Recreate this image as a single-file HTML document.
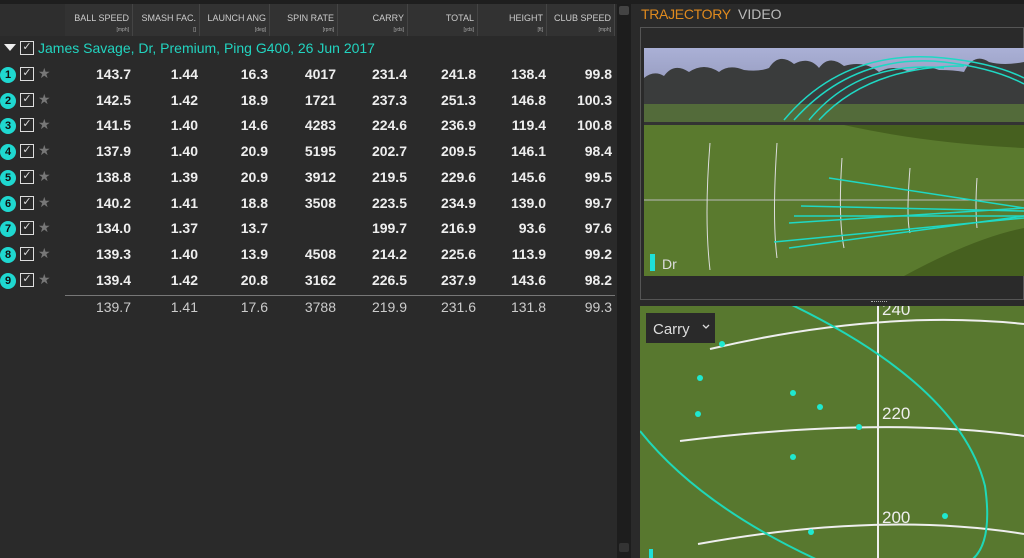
<!DOCTYPE html>
<html><head><meta charset="utf-8"><style>
*{margin:0;padding:0;box-sizing:border-box}
body{width:1024px;height:558px;overflow:hidden;background:#2a2a2a;font-family:"Liberation Sans",sans-serif;position:relative;color:#eee}
.a{position:absolute}
.hd{position:absolute;top:4px;height:32px;background:#323232;border-right:1px solid #444}
.hd b{position:absolute;right:3px;top:9px;font-size:9px;font-weight:normal;color:#ccc;white-space:nowrap}
.hd i{position:absolute;right:3px;top:23px;font-size:5px;font-style:normal;color:#aaa}
.n{position:absolute;font-size:14px;font-weight:bold;text-align:right;color:#eee}
.v{position:absolute;font-size:14px;text-align:right;color:#ccc}
.c{position:absolute;left:0px;width:16px;height:16px;border-radius:50%;background:#1fd8d0;color:#111;font-size:11px;text-align:center;line-height:16px;font-weight:bold}
.cb{position:absolute;left:20px;width:14px;height:14px;border:1.5px solid #ddd;font-size:11px;line-height:11px;text-align:center;color:#ddd}
.st{position:absolute;left:38px;font-size:14px;color:#777}
</style></head><body>
<div class="a" style="left:0;top:0;width:1024px;height:4px;background:#1e1e1e"></div>
<div class="hd" style="left:65px;width:68px"><b>BALL SPEED</b><i>[mph]</i></div>
<div class="hd" style="left:133px;width:67px"><b>SMASH FAC.</b><i>[]</i></div>
<div class="hd" style="left:200px;width:70px"><b>LAUNCH ANG</b><i>[deg]</i></div>
<div class="hd" style="left:270px;width:68px"><b>SPIN RATE</b><i>[rpm]</i></div>
<div class="hd" style="left:338px;width:70px"><b>CARRY</b><i>[yds]</i></div>
<div class="hd" style="left:408px;width:70px"><b>TOTAL</b><i>[yds]</i></div>
<div class="hd" style="left:478px;width:69px"><b>HEIGHT</b><i>[ft]</i></div>
<div class="hd" style="left:547px;width:68px"><b>CLUB SPEED</b><i>[mph]</i></div>
<div class="a" style="left:0;top:4px;width:65px;height:32px;background:#2e2e2e"></div>
<div class="a" style="left:4px;top:44px;width:0;height:0;border-left:6px solid transparent;border-right:6px solid transparent;border-top:7px solid #eee"></div>
<div class="cb" style="top:41px">✓</div>
<div class="a" style="left:38px;top:40px;font-size:14px;color:#22d4c0">James Savage, Dr, Premium, Ping G400, 26 Jun 2017</div>
<div id="rows"></div>
<div class="a" style="left:65px;top:295px;width:550px;height:1px;background:#777"></div>
<div class="a" style="left:617px;top:4px;width:14px;height:554px;background:#1d1d1d"></div>
<div class="a" style="left:619px;top:6px;width:10px;height:9px;background:#444;border-radius:2px"></div>
<div class="a" style="left:619px;top:543px;width:10px;height:9px;background:#333;border-radius:2px"></div>
<div class="a" style="left:641px;top:6px;font-size:14px;color:#e08a1e;letter-spacing:-0.3px">TRAJECTORY</div>
<div class="a" style="left:738px;top:6px;font-size:14px;color:#bbb">VIDEO</div>
<div class="a" style="left:640px;top:27px;width:384px;height:273px;border:1px solid #555;background:#2a2a2a"></div>
<svg class="a" style="left:644px;top:48px" width="380" height="228" viewBox="0 0 380 228">
<defs><linearGradient id="sk" x1="0" y1="0" x2="0" y2="1"><stop offset="0" stop-color="#aab0d6"/><stop offset="1" stop-color="#8a8fb0"/></linearGradient></defs>
<rect width="380" height="62" fill="url(#sk)"/>
<path d="M0 62 L0 30 Q10 22 20 28 Q30 14 45 24 Q60 14 75 24 Q85 16 100 22 Q115 24 125 20 Q135 4 150 16 Q165 8 175 20 Q185 6 200 18 Q220 12 235 24 Q250 16 265 24 Q280 16 295 22 Q310 22 320 24 Q330 4 345 14 Q360 18 380 14 L380 62 Z" fill="#3a3c3c"/>
<rect y="56" width="380" height="18" fill="#536b3a"/>
<rect y="74" width="380" height="3" fill="#333"/>
<rect y="77" width="380" height="151" fill="#5a7a2e"/>
<path d="M200 77 Q280 95 380 100 L380 77 Z" fill="#46601f"/>
<path d="M260 228 Q330 190 380 180 L380 228 Z" fill="#46601f"/>
<line x1="0" y1="152" x2="380" y2="152" stroke="#bbb" stroke-width="1"/>
<g stroke="#ddd" stroke-width="1" fill="none"><path d="M66 95 Q60 170 66 222"/><path d="M133 95 Q128 170 133 210"/><path d="M198 110 Q194 170 200 200"/><path d="M266 120 Q262 170 266 185"/><path d="M333 130 Q331 160 333 180"/></g>
<g stroke="#1fd8c4" stroke-width="1.5" fill="none"><path d="M185 130 L380 160"/><path d="M157 158 L380 163"/><path d="M150 168 L380 168"/><path d="M145 175 L380 160"/><path d="M130 194 L380 170"/><path d="M145 200 L380 168"/>
<path d="M140 72 Q200 0 300 10 Q350 15 380 30"/><path d="M150 72 Q210 5 300 14 Q350 20 380 36"/><path d="M165 72 Q215 12 300 20"/><path d="M175 72 Q225 18 320 18"/></g>
<rect x="6" y="206" width="5" height="17" fill="#1fe0d8"/>
<text x="18" y="221" font-size="14" fill="#ddd" font-family="Liberation Sans">Dr</text>
</svg>
<div class="a" style="left:871px;top:301px;width:16px;height:3px;border-top:1px dotted #aaa"></div>
<svg class="a" style="left:640px;top:306px" width="384" height="252" viewBox="0 0 384 252">
<rect width="384" height="252" fill="#58782f"/>
<g stroke="#eee" stroke-width="2" fill="none"><path d="M70 43 Q240 3 384 18"/><path d="M40 135 Q240 110 384 130"/><path d="M58 238 Q240 205 384 228"/><line x1="238" y1="0" x2="238" y2="252"/></g>
<g fill="#eee" font-size="17" font-family="Liberation Sans"><text x="242" y="9">240</text><text x="242" y="113">220</text><text x="242" y="217">200</text></g>
<g stroke="#1fd8b8" stroke-width="2" fill="none"><path d="M150 -2 Q320 80 345 180 Q355 250 320 260"/><path d="M0 125 Q60 200 180 255"/></g>
<g fill="#1fe8d0"><circle cx="82" cy="38" r="3"/><circle cx="60" cy="72" r="3"/><circle cx="153" cy="87" r="3"/><circle cx="180" cy="101" r="3"/><circle cx="58" cy="108" r="3"/><circle cx="219" cy="121" r="3"/><circle cx="153" cy="151" r="3"/><circle cx="305" cy="210" r="3"/><circle cx="171" cy="226" r="3"/></g>
<rect x="6" y="7" width="69" height="30" fill="#2a2a2a"/>
<text x="13" y="28" font-size="15" fill="#ddd" font-family="Liberation Sans">Carry</text>
<path d="M63 19 l3 3 l3 -3" stroke="#ddd" stroke-width="1.3" fill="none"/>
<rect x="9" y="243" width="4" height="10" fill="#1fe0d8"/>
</svg>
<script>
var d=[["143.7","1.44","16.3","4017","231.4","241.8","138.4","99.8"],["142.5","1.42","18.9","1721","237.3","251.3","146.8","100.3"],["141.5","1.40","14.6","4283","224.6","236.9","119.4","100.8"],["137.9","1.40","20.9","5195","202.7","209.5","146.1","98.4"],["138.8","1.39","20.9","3912","219.5","229.6","145.6","99.5"],["140.2","1.41","18.8","3508","223.5","234.9","139.0","99.7"],["134.0","1.37","13.7","","199.7","216.9","93.6","97.6"],["139.3","1.40","13.9","4508","214.2","225.6","113.9","99.2"],["139.4","1.42","20.8","3162","226.5","237.9","143.6","98.2"]];
var R=[131,198,268,336,407,476,546,612],h="";
d.forEach(function(r,i){var y=66+i*25.7;
h+='<div class="c" style="top:'+(y+1)+'px">'+(i+1)+'</div><div class="cb" style="top:'+(y+1)+'px">✓</div><div class="st" style="top:'+(y-1)+'px">★</div>';
r.forEach(function(v,j){h+='<div class="n" style="top:'+y+'px;left:'+(R[j]-60)+'px;width:60px">'+v+'</div>'})});
["139.7","1.41","17.6","3788","219.9","231.6","131.8","99.3"].forEach(function(v,j){h+='<div class="v" style="top:299px;left:'+(R[j]-60)+'px;width:60px">'+v+'</div>'});
document.getElementById("rows").innerHTML=h;
</script>
</body></html>
